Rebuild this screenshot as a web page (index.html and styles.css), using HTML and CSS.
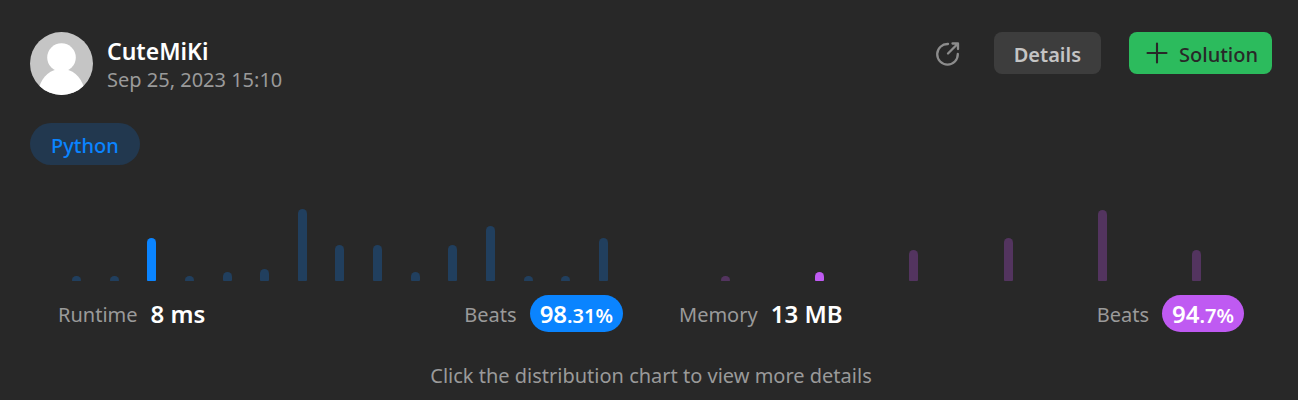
FILE: index.html
```html
<!DOCTYPE html>
<html lang="en">
<head>
<meta charset="utf-8">
<meta name="viewport" content="width=device-width, initial-scale=1">
<title>Submission</title>
<link rel="stylesheet" href="styles.css">
</head>
<body>
<main class="submission">
  <header class="header">
    <svg class="avatar" viewBox="0 0 63 63" aria-hidden="true">
      <defs><clipPath id="avatar-clip"><circle cx="31.5" cy="31.5" r="31.5"/></clipPath></defs>
      <g clip-path="url(#avatar-clip)">
        <rect width="63" height="63" fill="#c5c5c5"/>
        <circle cx="31.5" cy="25.5" r="14.3" fill="#fff"/>
        <path d="M9 56C12 44 21 37 31.500 37S51 44 54 56V63H9Z" fill="#fff"/>
      </g>
    </svg>
    <div class="author">
      <h1 class="name">CuteMiKi</h1>
      <time class="date" datetime="2023-09-25T15:10">Sep 25, 2023 15:10</time>
    </div>
    <div class="actions">
      <button class="share" type="button" aria-label="Share">
        <svg viewBox="0 0 26 26" width="26" height="26" fill="none" stroke="#8c8c8c" stroke-width="2.300" stroke-linecap="round" stroke-linejoin="round" aria-hidden="true">
          <path d="M13 4A10.300 10.300 0 1 0 22.800 14"/>
          <path d="M13 13.500L22.500 4M17.500 3.500H23V9"/>
        </svg>
      </button>
      <button class="btn details" type="button">Details</button>
      <button class="btn solution" type="button">
        <svg viewBox="0 0 22 22" width="22" height="22" stroke="#282828" stroke-width="2.100" stroke-linecap="round" aria-hidden="true"><path d="M11 1.500V20.500M1.500 11H20.500"/></svg>
        Solution
      </button>
    </div>
  </header>
  <a class="tag" href="#">Python</a>
  <section class="stats">
    <button class="stat runtime" type="button">
      <span class="chart">
        <span class="bar" style="height:5px"></span>
        <span class="bar" style="height:5px"></span>
        <span class="bar current" style="height:43px"></span>
        <span class="bar" style="height:5px"></span>
        <span class="bar" style="height:9px"></span>
        <span class="bar" style="height:12px"></span>
        <span class="bar" style="height:72px"></span>
        <span class="bar" style="height:36px"></span>
        <span class="bar" style="height:36px"></span>
        <span class="bar" style="height:9px"></span>
        <span class="bar" style="height:36px"></span>
        <span class="bar" style="height:55px"></span>
        <span class="bar" style="height:5px"></span>
        <span class="bar" style="height:5px"></span>
        <span class="bar" style="height:43px"></span>
      </span>
      <span class="summary">
        <span class="label">Runtime</span>
        <span class="value">8 ms</span>
        <span class="label beats">Beats</span>
        <span class="pill">98<span class="decimal">.31%</span></span>
      </span>
    </button>
    <button class="stat memory" type="button">
      <span class="chart">
        <span class="bar" style="height:5px"></span>
        <span class="bar current" style="height:9px"></span>
        <span class="bar" style="height:31px"></span>
        <span class="bar" style="height:43px"></span>
        <span class="bar" style="height:71px"></span>
        <span class="bar" style="height:31px"></span>
      </span>
      <span class="summary">
        <span class="label">Memory</span>
        <span class="value">13 MB</span>
        <span class="label beats">Beats</span>
        <span class="pill">94<span class="decimal">.7%</span></span>
      </span>
    </button>
  </section>
  <p class="hint">Click the distribution chart to view more details</p>
</main>
</body>
</html>
```
FILE: styles.css
```css
* {
  box-sizing: border-box;
}

body {
  margin: 0;
  background: #282828;
  color: #fff;
  font: 20px/28px "Noto Sans", "Segoe UI", sans-serif;
}

button {
  margin: 0;
  padding: 0;
  border: 0;
  background: none;
  color: inherit;
  font: inherit;
  cursor: pointer;
}

.submission {
  display: flex;
  flex-direction: column;
  padding: 32px 26px 10px 30px;
}

.header {
  display: flex;
  align-items: flex-start;
}

.avatar {
  width: 63px;
  height: 63px;
}

.author {
  display: flex;
  flex-direction: column;
  margin-left: 14px;
  padding-top: 4px;
}

.name {
  margin: 0;
  font-size: 23px;
  font-weight: 600;
  line-height: 30px;
}

.date {
  color: #9a9a9a;
}

.actions {
  display: flex;
  align-items: center;
  gap: 28px;
  margin-left: auto;
}

.share {
  display: flex;
  padding: 0 5px;
}

.btn {
  display: flex;
  align-items: center;
  height: 42px;
  border-radius: 8px;
  font-weight: 500;
}

.details {
  padding: 3px 20px 0;
  background: #3d3d3d;
  color: #c4c4c4;
  font-weight: 600;
}

.solution {
  gap: 11px;
  padding: 3px 14px 0 17px;
  background: #2cbb5d;
  color: #282828;
}

.solution svg {
  margin-bottom: 4px;
}

.tag {
  align-self: flex-start;
  margin-top: 28px;
  padding: 9px 21px 5px;
  border-radius: 21px;
  background: #22384f;
  color: #0a84ff;
  font-weight: 500;
  text-decoration: none;
}

.stats {
  display: grid;
  grid-template-columns: 1fr 1fr;
  margin-top: 44px;
}

.stat {
  padding: 0 28px;
}

.chart {
  display: flex;
  align-items: flex-end;
  justify-content: space-between;
  height: 72px;
  padding: 0 15px 0 14px;
}

.memory .chart {
  padding: 0 43px 0 42px;
}

.bar {
  width: 9px;
  border-radius: 5px 5px 1px 1px;
}

.runtime .bar {
  background: #213f5e;
}

.memory .bar {
  background: #53345f;
}

.runtime .current,
.runtime .pill {
  background: #0a84ff;
}

.memory .current,
.memory .pill {
  background: #bf5af2;
}

.summary {
  display: flex;
  align-items: center;
  gap: 13px;
  margin-top: 14px;
}

.label {
  padding-top: 2px;
  color: #9a9a9a;
}

.value {
  font-size: 24px;
  font-weight: 600;
}

.beats {
  margin-left: auto;
}

.pill {
  padding: 4px 10px;
  border-radius: 19px;
  font-size: 24px;
  font-weight: 600;
  line-height: 29px;
}

.decimal {
  font-size: 20px;
  line-height: 20px;
}

.hint {
  margin: 30px 0 0;
  color: #9a9a9a;
  text-align: center;
}
```
